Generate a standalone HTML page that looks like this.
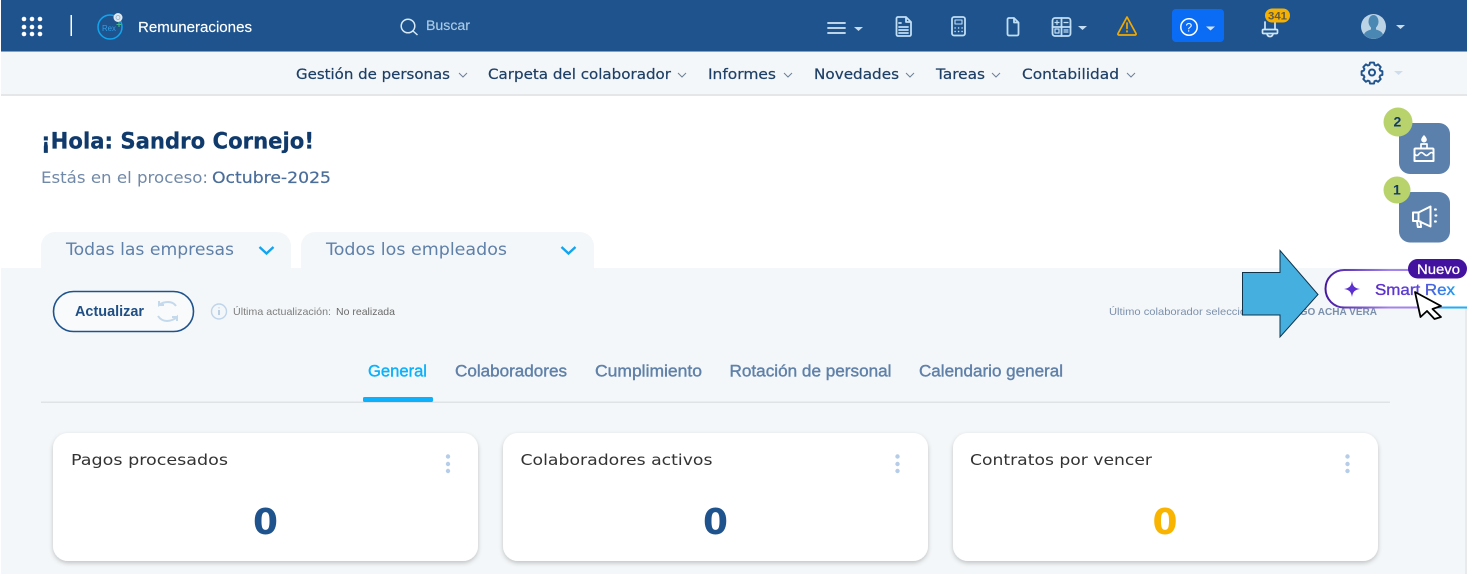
<!DOCTYPE html>
<html lang="es"><head><meta charset="utf-8"><title>Remuneraciones</title>
<style>
html,body{margin:0;padding:0;width:1467px;height:574px;overflow:hidden;background:#fff}
svg{display:block}
text{font-family:"Liberation Sans",sans-serif;white-space:pre}
.m{font-family:"DejaVu Sans","Liberation Sans",sans-serif}
</style></head><body>
<svg xmlns="http://www.w3.org/2000/svg" width="1467" height="574" viewBox="0 0 1467 574">
<defs>
<filter id="s" x="-5%" y="-10%" width="110%" height="125%"><feDropShadow dx="0" dy="2" stdDeviation="2.5" flood-color="#000" flood-opacity=".22"/></filter>
<linearGradient id="g" x1="0" x2="1"><stop offset="0" stop-color="#5b2bc9"/><stop offset=".55" stop-color="#5b45d8"/><stop offset="1" stop-color="#1f9cf0"/></linearGradient>
<linearGradient id="b" gradientUnits="userSpaceOnUse" x1="1325" y1="0" x2="1467" y2="0"><stop offset="0" stop-color="#45169f"/><stop offset=".45" stop-color="#a583ea"/><stop offset=".75" stop-color="#a583ea"/><stop offset=".85" stop-color="#22aef5"/><stop offset="1" stop-color="#22aef5"/></linearGradient>
</defs>
<rect width="1467" height="574" fill="#fff"/>
<rect x="1" y="0" width="1466" height="51" fill="#1f538d"/>
<rect x="1" y="51" width="1466" height="1" fill="#7ea3c8"/>
<rect x="1" y="52" width="1466" height="42" fill="#f4f7f9"/>
<rect x="1" y="94" width="1466" height="2" fill="#e5e6e8"/>

<!-- apps -->
<g fill="#fff"><circle cx="24" cy="19" r="2.3"/><circle cx="32" cy="19" r="2.3"/><circle cx="40" cy="19" r="2.3"/><circle cx="24" cy="27" r="2.3"/><circle cx="32" cy="27" r="2.3"/><circle cx="40" cy="27" r="2.3"/><circle cx="24" cy="34" r="2.3"/><circle cx="32" cy="34" r="2.3"/><circle cx="40" cy="34" r="2.3"/></g>
<rect x="70.5" y="15" width="1.5" height="21" fill="#fff"/>
<circle cx="110" cy="27" r="12" fill="none" stroke="#11a5ee" stroke-width="1.5"/>
<text x="102" y="31" font-size="8.500" fill="#2f9fe6" textLength="14" lengthAdjust="spacingAndGlyphs">Rex</text>
<path d="M119 22v5M116.500 24.500h5" stroke="#46b58a" stroke-width="1.100"/>
<circle cx="118" cy="17.500" r="4.500" fill="#dfe9f2"/><circle cx="118" cy="17.500" r="2" fill="none" stroke="#8fb1d0" stroke-width=".8"/>
<text x="138" y="32" font-size="14.500" fill="#fff" stroke="#fff" stroke-width=".15" textLength="114" lengthAdjust="spacingAndGlyphs">Remuneraciones</text>
<circle cx="408" cy="26" r="6.800" fill="none" stroke="#d6e8f5" stroke-width="1.500"/><path d="M413 31l4.500 4" stroke="#d6e8f5" stroke-width="1.500"/>
<text x="426" y="30" font-size="13.500" fill="#a9cbe6" stroke="#a9cbe6" stroke-width=".15" textLength="44" lengthAdjust="spacingAndGlyphs">Buscar</text>

<!-- top icons -->
<g fill="none" stroke="#c0def4" stroke-width="1.800" stroke-linecap="round" stroke-linejoin="round">
<path d="M828 23h17M828 28h17M828 33h17" stroke="#d3e6f5" stroke-width="1.800"/>
<path d="M898 17h8l5 5v12.500a1.500 1.500 0 0 1-1.500 1.500h-11.500a1.500 1.500 0 0 1-1.500-1.500v-16a1.500 1.500 0 0 1 1.500-1.500zM906 17v5h5M899 23h2M899 27h9M899 30h9M899 33h9"/>
<rect x="952" y="17" width="13" height="18.500" rx="2"/><rect x="955" y="20" width="7" height="4" stroke-width="1.100"/>
<path d="M955 28h.2M958.500 28h.2M962 28h.2M955 31.500h.2M958.500 31.500h.2M962 31.500h.2" stroke-width="1.400"/>
<path d="M1009 18h5l4.500 4.500v11.500a1.500 1.500 0 0 1-1.500 1.500h-8a1.500 1.500 0 0 1-1.500-1.500v-14.500a1.500 1.500 0 0 1 1.500-1.500zM1014 18v4.500h4.500"/>
<rect x="1052.500" y="18" width="18" height="18" rx="2.500"/><path d="M1061.500 18v18M1052.500 27h18"/>
<path d="M1057 20.500v4M1055 22.500h4M1064 22.500h4M1055 29h4v4h-4zM1064 30h4M1064 32h4" stroke-width="1.200"/>
<path d="M1265 22v7M1275 22v7M1263.500 29.500h13a1 1 0 0 1 1 1v2a1 1 0 0 1-1 1h-13a1 1 0 0 1-1-1v-2a1 1 0 0 1 1-1zM1267 34c.4 1.600 1.500 2.500 3 2.500s2.600-.9 3-2.500" stroke="#cfe6f8" stroke-width="1.700"/>
</g>
<g fill="#c6dcf0"><path d="M854 27h9l-4.500 4zM1078 26h9l-4.500 4zM1396 25h9l-4.500 4z"/></g>
<path d="M1127 17l9 16.500a1 1 0 0 1-1 1.500h-16a1 1 0 0 1-1-1.500z" fill="none" stroke="#f2a900" stroke-width="1.700" stroke-linejoin="round"/>
<path d="M1127 23v5.500M1127 31v.8" stroke="#f2a900" stroke-width="1.700" stroke-linecap="round"/>
<rect x="1172" y="9" width="52" height="33" rx="4" fill="#0a6cf5"/>
<circle cx="1189" cy="27" r="8.200" fill="none" stroke="#fff" stroke-width="1.500"/>
<text x="1185.500" y="31.500" font-size="12" fill="#fff">?</text>
<path d="M1206 26.500h9l-4.500 4z" fill="#d4e4f5"/>
<rect x="1265" y="8.500" width="25" height="14" rx="7" fill="#f5b000"/>
<text x="1268" y="19.500" font-size="11" font-weight="bold" fill="#5f5a3f" textLength="19" lengthAdjust="spacingAndGlyphs">341</text>
<circle cx="1373.500" cy="26.500" r="12.500" fill="#bcd3e6"/>
<path d="M1373.500 15a5 6.500 0 0 1 5 6.500c0 3-1.500 5-2.500 6v2c3 1 6 2 7 5a12.500 12.500 0 0 1-19 0c1-3 4-4 7-5v-2c-1-1-2.500-3-2.500-6a5 6.500 0 0 1 5-6.500z" fill="#4b87b3"/>

<!-- nav -->
<g stroke="#1e3f66" stroke-width=".2">
<text class="m" x="296" y="79" font-size="14" fill="#1e3f66" textLength="154" lengthAdjust="spacingAndGlyphs">Gestión de personas</text>
<text class="m" x="488" y="79" font-size="14" fill="#1e3f66" textLength="183" lengthAdjust="spacingAndGlyphs">Carpeta del colaborador</text>
<text class="m" x="708" y="79" font-size="14" fill="#1e3f66" textLength="68" lengthAdjust="spacingAndGlyphs">Informes</text>
<text class="m" x="814" y="79" font-size="14" fill="#1e3f66" textLength="85" lengthAdjust="spacingAndGlyphs">Novedades</text>
<text class="m" x="936" y="79" font-size="14" fill="#1e3f66" textLength="49" lengthAdjust="spacingAndGlyphs">Tareas</text>
<text class="m" x="1022" y="79" font-size="14" fill="#1e3f66" textLength="97" lengthAdjust="spacingAndGlyphs">Contabilidad</text>
</g>
<g fill="none" stroke="#6d8197" stroke-width="1"><path d="M459 73l4 4 4-4M678 73l4 4 4-4M784 73l4 4 4-4M906 73l4 4 4-4M992 73l4 4 4-4M1127 73l4 4 4-4"/></g>
<g fill="none" stroke="#1f538d" stroke-width="2" stroke-linejoin="round">
<path d="M1369 63h5l.6 2.800 2 .9 2.500-1.500 3.300 3.400-1.500 2.400.9 2.100 2.700.6v4.800l-2.700.6-.9 2.100 1.500 2.400-3.300 3.400-2.500-1.500-2 .9-.6 2.800h-5l-.6-2.800-2-.9-2.500 1.500-3.300-3.400 1.500-2.400-.9-2.100-2.700-.6v-4.800l2.700-.6.9-2.100-1.500-2.400 3.300-3.400 2.500 1.500 2-.9z" transform="translate(1372 72.500) scale(.8) translate(-1371.500 -75.400)" stroke-width="2.400"/>
<circle cx="1372" cy="72.500" r="3"/></g>
<path d="M1394 71h9l-4.500 4z" fill="#cfdcea"/>

<!-- greeting -->
<text class="m" x="41" y="148.500" font-size="22" font-weight="bold" fill="#0f3a6b" stroke="#0f3a6b" stroke-width=".25" textLength="273" lengthAdjust="spacingAndGlyphs">¡Hola: Sandro Cornejo!</text>
<text class="m" x="41" y="183" font-size="16" fill="#7189a8" textLength="167" lengthAdjust="spacingAndGlyphs">Estás en el proceso:</text>
<text class="m" x="212" y="183" font-size="16" fill="#4a6d9a" stroke="#4a6d9a" stroke-width=".2" textLength="119" lengthAdjust="spacingAndGlyphs">Octubre-2025</text>

<!-- content bg -->
<rect x="1" y="268" width="1464" height="306" fill="#f4f7f9"/>
<rect x="1465" y="268" width="2" height="306" fill="#e8eaec"/>
<path d="M41 268v-22a14 14 0 0 1 14-14h222a14 14 0 0 1 14 14v22z" fill="#f4f7f9"/>
<path d="M301 268v-22a14 14 0 0 1 14-14h265a14 14 0 0 1 14 14v22z" fill="#f4f7f9"/>
<text class="m" x="66" y="255" font-size="17" fill="#5f80a9" textLength="168" lengthAdjust="spacingAndGlyphs">Todas las empresas</text>
<text class="m" x="326" y="255" font-size="17" fill="#5f80a9" textLength="181" lengthAdjust="spacingAndGlyphs">Todos los empleados</text>
<path d="M259.500 247l7 6.500 7-6.500M561.500 247l7 6.500 7-6.500" fill="none" stroke="#12a4ee" stroke-width="2.400"/>

<!-- actualizar -->
<rect x="53.500" y="291.500" width="140" height="40" rx="20" fill="#f8fafb" stroke="#1f538d" stroke-width="1.600"/>
<text x="75" y="316" font-size="14.500" font-weight="bold" fill="#1f4f85" textLength="69" lengthAdjust="spacingAndGlyphs">Actualizar</text>
<g fill="none" stroke="#c5d9ec" stroke-width="2"><path d="M176 306c-2-3-5-4-8-4-4 0-7 1.500-9 3v-4M159 305h5M158 316c2 3 5 5 9 5s8-2 10-4v4M177 317h-5"/></g>
<circle cx="219" cy="311.500" r="7.500" fill="none" stroke="#bed4ea" stroke-width="1.400"/>
<path d="M219 310v5M219 307.500v.8" stroke="#a9c4de" stroke-width="1.500"/>
<text x="233" y="315" font-size="10.500" fill="#7d7d7d" textLength="98" lengthAdjust="spacingAndGlyphs">Última actualización:</text>
<text x="336" y="315" font-size="10.500" fill="#6b6b6b" textLength="59" lengthAdjust="spacingAndGlyphs">No realizada</text>
<text x="1109" y="315" font-size="10.500" fill="#7b90ad" textLength="165" lengthAdjust="spacingAndGlyphs">Último colaborador seleccionado:</text>
<text x="1283" y="315" font-size="10.500" font-weight="bold" fill="#7b90ad" textLength="94" lengthAdjust="spacingAndGlyphs">DIEGO ACHA VERA</text>

<!-- tabs -->
<text x="368" y="376.500" font-size="17" fill="#0db1fb" stroke="#0db1fb" stroke-width=".4" textLength="59" lengthAdjust="spacingAndGlyphs">General</text>
<g font-size="17" fill="#5f80a9" stroke="#5f80a9" stroke-width=".4">
<text x="455" y="376.500" textLength="112" lengthAdjust="spacingAndGlyphs">Colaboradores</text>
<text x="595" y="376.500" textLength="107" lengthAdjust="spacingAndGlyphs">Cumplimiento</text>
<text x="729.500" y="376.500" textLength="162" lengthAdjust="spacingAndGlyphs">Rotación de personal</text>
<text x="919" y="376.500" textLength="144" lengthAdjust="spacingAndGlyphs">Calendario general</text>
</g>
<rect x="41" y="401.500" width="1349" height="1.500" fill="#dfe3e6"/>
<rect x="363" y="397" width="70" height="5" rx="1.500" fill="#0db1fb"/>

<!-- cards -->
<g filter="url(#s)" fill="#fff"><rect x="53" y="433" width="425" height="128" rx="15"/><rect x="503" y="433" width="425" height="128" rx="15"/><rect x="953" y="433" width="425" height="128" rx="15"/></g>
<g>
<text class="m" x="71" y="465" font-size="15.500" fill="#333" textLength="157" lengthAdjust="spacingAndGlyphs">Pagos procesados</text>
<text class="m" x="520.500" y="465" font-size="15.500" fill="#333" textLength="192" lengthAdjust="spacingAndGlyphs">Colaboradores activos</text>
<text class="m" x="970" y="465" font-size="15.500" fill="#333" textLength="182" lengthAdjust="spacingAndGlyphs">Contratos por vencer</text>
<text class="m" x="253" y="534" font-size="36" font-weight="bold" fill="#1f538d" textLength="25" lengthAdjust="spacingAndGlyphs">0</text>
<text class="m" x="703" y="534" font-size="36" font-weight="bold" fill="#1f538d" textLength="25" lengthAdjust="spacingAndGlyphs">0</text>
<text class="m" x="1152.500" y="534" font-size="36" font-weight="bold" fill="#f8b400" textLength="25" lengthAdjust="spacingAndGlyphs">0</text>
</g>
<g fill="#b5cde8"><circle cx="448" cy="456.500" r="2.200"/><circle cx="448" cy="464" r="2.200"/><circle cx="448" cy="471" r="2.200"/><circle cx="897.500" cy="456.500" r="2.200"/><circle cx="897.500" cy="464" r="2.200"/><circle cx="897.500" cy="471" r="2.200"/><circle cx="1347.500" cy="456.500" r="2.200"/><circle cx="1347.500" cy="464" r="2.200"/><circle cx="1347.500" cy="471" r="2.200"/></g>

<!-- side buttons -->
<rect x="1399" y="123" width="51" height="51" rx="11" fill="#5a80ab"/>
<rect x="1399" y="192" width="51" height="50.500" rx="11" fill="#5a80ab"/>
<circle cx="1398" cy="122" r="14.500" fill="#b9d36c"/><circle cx="1397" cy="190" r="13.500" fill="#b9d36c"/>
<text x="1393.500" y="126.500" font-size="14" font-weight="bold" fill="#123a68">2</text>
<text x="1393" y="194.500" font-size="14" font-weight="bold" fill="#123a68">1</text>
<g fill="none" stroke="#fff" stroke-width="2" stroke-linejoin="round" stroke-linecap="round">
<path d="M1414.500 161v-11.500a1 1 0 0 1 1-1h17a1 1 0 0 1 1 1v11.500z"/>
<path d="M1414.500 154c2 2 3 2 4.500 0s3-2 5 0 3 2 5 0 3-2 4.500 0" stroke-width="1.600"/>
<path d="M1421 148v-4h6v4" stroke-width="1.700"/>
<path d="M1424 135.500c1.700 1.800 2.400 3 2.400 4.200a2.400 2.400 0 0 1-4.800 0c0-1.200.7-2.400 2.400-4.200z" fill="#fff" stroke-width=".8"/>
<path d="M1413 212.500h5.500l12-6v20l-12-5.500h-5.500zM1418.500 212.500v8.500M1417 221l.8 6h3.200l-.5-5.500"/>
<path d="M1435 209.500h.8M1435.500 215.500h.8M1435 221.500h.8" stroke-width="2.200"/>
</g>

<!-- smart rex -->
<rect x="1325.500" y="270" width="190" height="37.500" rx="18.700" fill="#fff" stroke="url(#b)" stroke-width="2"/>
<rect x="1465" y="268" width="2" height="38" fill="#fff"/>
<path d="M1352 281c.8 5 2.500 7.200 8 8-5.500.8-7.200 3-8 8-.8-5-2.500-7.200-8-8 5.500-.8 7.200-3 8-8z" fill="#5c30d0"/>
<text x="1375" y="295" font-size="16" fill="url(#g)" stroke="url(#g)" stroke-width=".35" textLength="80" lengthAdjust="spacingAndGlyphs">Smart Rex</text>
<rect x="1408" y="259" width="59" height="19.500" rx="9.700" fill="#43129f"/>
<text x="1417" y="274" font-size="14" fill="#fff" stroke="#fff" stroke-width=".3" textLength="43" lengthAdjust="spacingAndGlyphs">Nuevo</text>

<!-- arrow -->
<path d="M1242.500 272.500h37.500v-22l38 44-38 42.500v-22h-37.500z" fill="#45afe0" stroke="#11334a" stroke-width="1"/>
<!-- cursor -->
<path d="M1415 292l26 14-8.500 3 8.500 8-6.500 2-7.500-8-6.500 6z" fill="#fff" stroke="#000" stroke-width="1.800" stroke-linejoin="round"/>
</svg>
</body></html>
